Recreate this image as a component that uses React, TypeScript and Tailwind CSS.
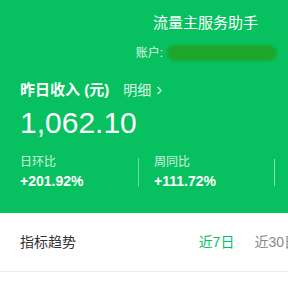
import { ChevronRight } from "lucide-react";

const font = "font-['Liberation_Sans','Noto_Sans_CJK_SC',sans-serif]";

const Stat = ({ label, value }: { label: string; value: string }) => {
  return (
    <div className="flex flex-col">
      <span className="text-[12px] leading-[18px] text-white/80">{label}</span>
      <span className="text-[14px] leading-[20px] font-bold text-white">{value}</span>
    </div>
  );
};

const App = () => {
  return (
    <div className={`w-[288px] h-[282px] overflow-hidden bg-white ${font}`}>
      {/* green summary card */}
      <div className="bg-[#07c160] h-[213px] pt-3">
        <div className="flex justify-end pr-[30px]">
          <h1 className="text-[15px] leading-[21px] text-white">流量主服务助手</h1>
        </div>

        <div className="flex justify-end items-center mt-[11px] pr-[11px] h-[18px]">
          <span className="text-[12px] text-white/85">账户:</span>
          <div className="ml-[4px] w-[110px] h-[16px] rounded-full bg-[#1da62b] blur-[1.5px]" />
        </div>

        <div className="flex items-center mt-[17px] px-5 h-[22px]">
          <span className="text-[15px] font-semibold text-white">昨日收入 (元)</span>
          <span className="ml-[14px] flex items-center text-[14px] text-white/85">
            明细
            <ChevronRight className="ml-[2px] w-[13px] h-[13px]" strokeWidth={2} />
          </span>
        </div>

        <div className="mt-[4px] px-5 text-[30px] leading-[36px] text-white">1,062.10</div>

        <div className="flex items-center mt-[12px] pl-5">
          <div className="w-[118px]">
            <Stat label="日环比" value="+201.92%" />
          </div>
          <div className="w-px h-[29px] bg-white/40" />
          <div className="w-[135px] pl-[15px]">
            <Stat label="周同比" value="+111.72%" />
          </div>
          <div className="w-px h-[27px] bg-white/50" />
        </div>
      </div>

      {/* trend header */}
      <div className="flex items-center h-[59px] px-5 border-b border-[#eeeeee] whitespace-nowrap">
        <span className="text-[14px] text-[#333333]">指标趋势</span>
        <div className="ml-auto -mr-[30px] flex items-center gap-[20px] text-[14px]">
          <span className="text-[#07c160]">近7日</span>
          <span className="text-[#888888]">近30日</span>
        </div>
      </div>
    </div>
  );
};

export default App;
